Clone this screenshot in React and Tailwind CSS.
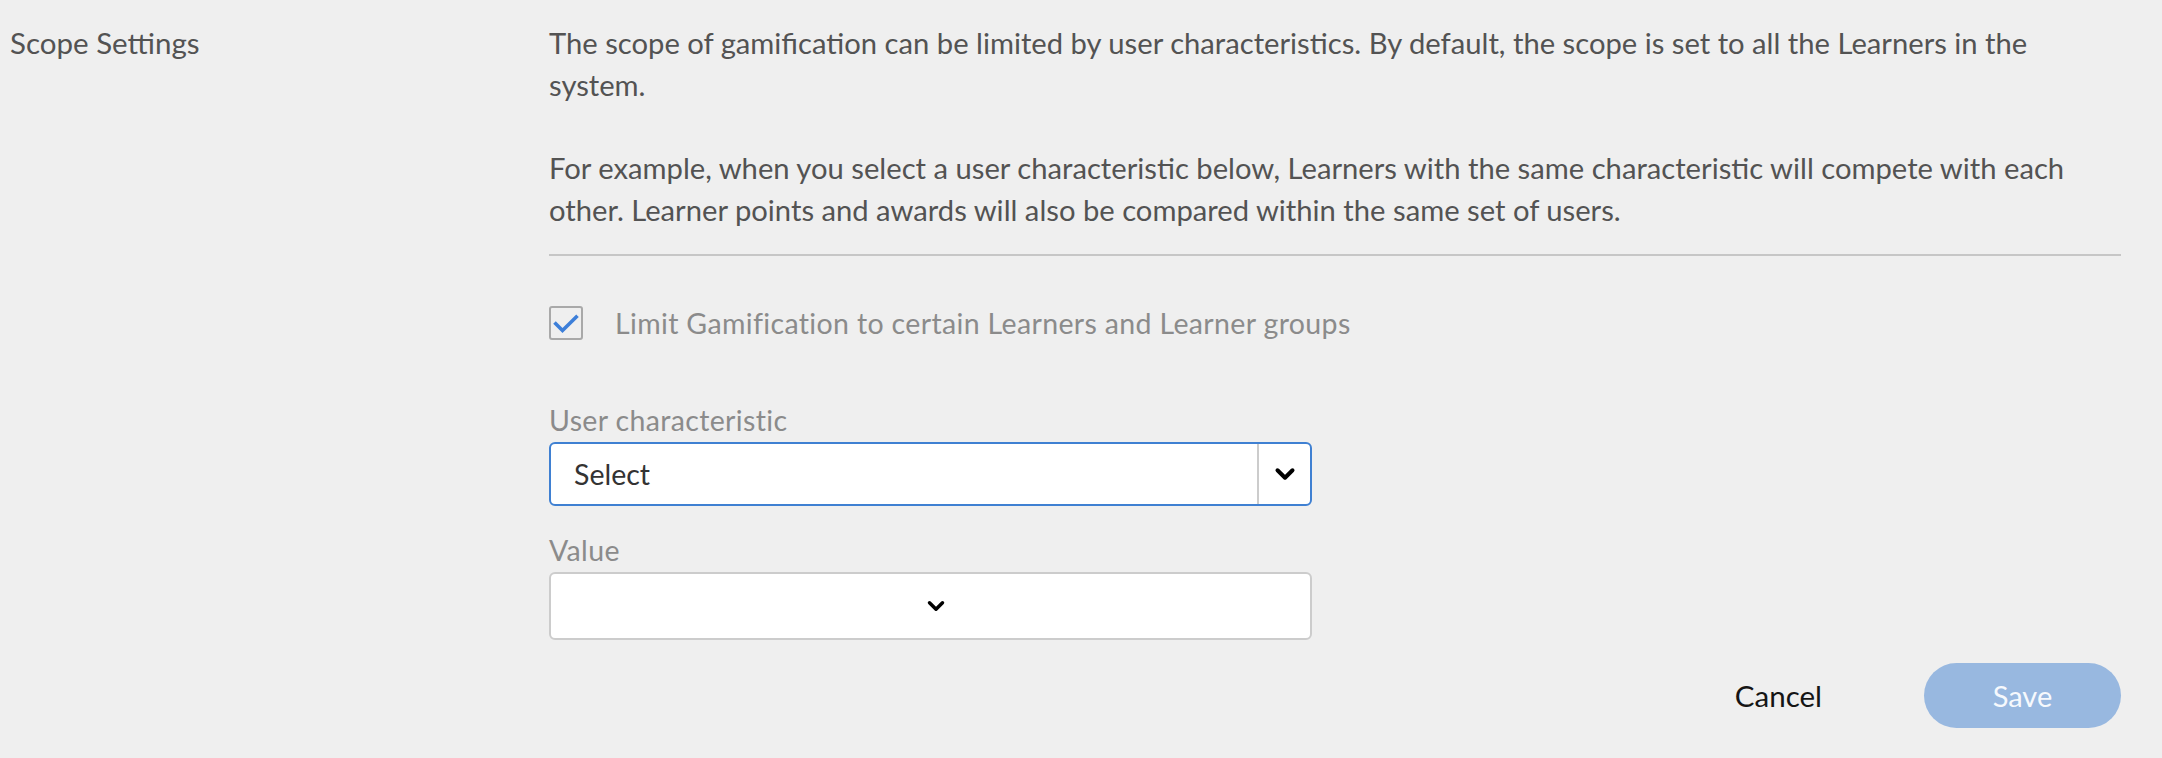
import { ChevronDown } from 'lucide-react';

const font = { fontFamily: 'Lato, "Noto Sans", sans-serif' };

export default function App() {
  return (
    <div className="min-h-screen bg-[#efefef] text-[#535353]" style={font}>
      <div className="flex pt-[22px]">
        <div className="w-[549px] shrink-0 pl-[10px] text-[29.5px] leading-[42px] text-[#535353]">Scope Settings</div>

        <div className="min-w-0 flex-1 pr-[41px]">
          <p className="whitespace-nowrap text-[29.2px] leading-[42px]">
            The scope of gamification can be limited by user characteristics. By default, the scope is set to all the Learners in the
            <br />
            system.
          </p>
          <p className="mt-[41px] whitespace-nowrap text-[29.2px] leading-[42px]">
            For example, when you select a user characteristic below, Learners with the same characteristic will compete with each
            <br />
            other. Learner points and awards will also be compared within the same set of users.
          </p>

          <div className="mt-[23px] h-[2px] bg-[#c6c6c6]" />

          <label className="mt-[50px] flex items-center gap-[32px]">
            <span className="flex h-[34px] w-[34px] shrink-0 items-center justify-center rounded-[3px] border-2 border-[#a9a9a9]">
              <svg width="30" height="30" viewBox="0 0 29 30" aria-hidden="true">
                <path d="M3 14.5 L11 22.5 L26 7.8" fill="none" stroke="#3d7fd9" strokeWidth="3.6" strokeLinejoin="miter" />
              </svg>
            </span>
            <span className="text-[28.5px] leading-[34px] tracking-[0.35px] text-[#8b8b8b]">
              Limit Gamification to certain Learners and Learner groups
            </span>
          </label>

          <div className="mt-[62px] w-[763px]">
            <div className="mb-[3px] text-[28.5px] leading-[37px] tracking-[0.35px] text-[#8b8b8b]">User characteristic</div>
            <div className="flex h-[64px] items-stretch rounded-[6px] border-2 border-[#3f80d2] bg-white">
              <div className="flex flex-1 items-center pl-[23px] text-[28.5px] text-[#333333]">Select</div>
              <div className="flex w-[53px] items-center justify-center border-l-2 border-[#cccccc]">
                <ChevronDown size={30} strokeWidth={3.2} className="text-black" aria-hidden="true" />
              </div>
            </div>

            <div className="mt-[26px] mb-[3px] text-[28.5px] leading-[37px] tracking-[0.35px] text-[#8b8b8b]">Value</div>
            <div className="flex h-[68px] items-center justify-center rounded-[6px] border-2 border-[#cccccc] bg-white">
              <ChevronDown size={26} strokeWidth={3.2} className="ml-[10px] text-black" aria-hidden="true" />
            </div>
          </div>

          <div className="mt-[23px] flex items-center justify-end">
            <button type="button" className="mr-[102px] text-[29.5px] leading-[40px] text-[#151515]">
              Cancel
            </button>
            <button
              type="button"
              className="h-[65px] w-[197px] rounded-full bg-[#98b8e0] text-[29px] text-[#f6f9fd]"
            >
              Save
            </button>
          </div>
        </div>
      </div>
    </div>
  );
}
